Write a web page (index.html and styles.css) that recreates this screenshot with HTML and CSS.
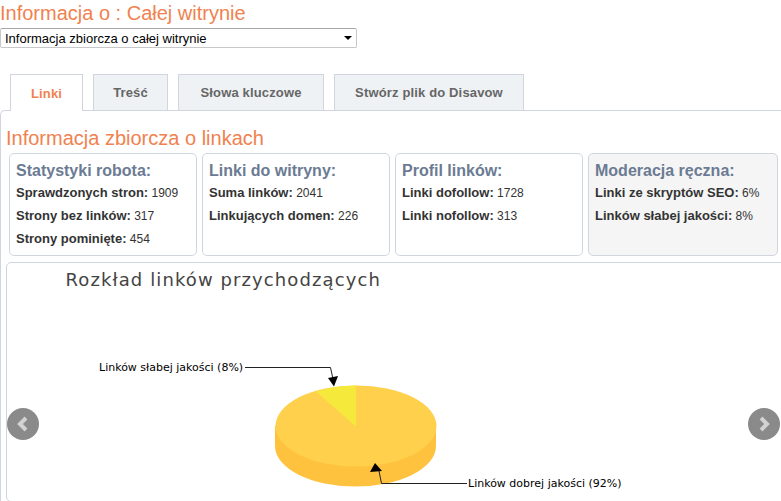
FILE: index.html
```html
<!DOCTYPE html>
<html>
<head>
    <meta charset="utf-8">
    <meta name="viewport" content="width=device-width, initial-scale=1.0">
    <link rel="stylesheet" href="styles.css">
</head>
<body>
    <div class="top">
        <h1 class="page-title">Informacja o : Całej witrynie</h1>
        <div class="select-box">
            <span>Informacja zbiorcza o całej witrynie</span>
            <span class="select-arrow"></span>
        </div>
    </div>

    <div class="tabs">
        <div class="tab active">Linki</div>
        <div class="tab tab-content">Treść</div>
        <div class="tab tab-keywords">Słowa kluczowe</div>
        <div class="tab tab-disavow">Stwórz plik do Disavow</div>
    </div>

    <div class="panel">
        <h2 class="panel-title">Informacja zbiorcza o linkach</h2>

        <div class="cards">
            <div class="card">
                <div class="card-title">Statystyki robota:</div>
                <div class="stat"><b>Sprawdzonych stron:</b> 1909</div>
                <div class="stat"><b>Strony bez linków:</b> 317</div>
                <div class="stat"><b>Strony pominięte:</b> 454</div>
            </div>
            <div class="card">
                <div class="card-title">Linki do witryny:</div>
                <div class="stat"><b>Suma linków:</b> 2041</div>
                <div class="stat"><b>Linkujących domen:</b> 226</div>
            </div>
            <div class="card">
                <div class="card-title">Profil linków:</div>
                <div class="stat"><b>Linki dofollow:</b> 1728</div>
                <div class="stat"><b>Linki nofollow:</b> 313</div>
            </div>
            <div class="card card-grey">
                <div class="card-title">Moderacja ręczna:</div>
                <div class="stat"><b>Linki ze skryptów SEO:</b> 6%</div>
                <div class="stat"><b>Linków słabej jakości:</b> 8%</div>
            </div>
        </div>

        <div class="chart">
            <svg class="chart-svg" width="775" height="238" viewBox="0 0 775 238">
                <text class="chart-title" x="58.5" y="23">Rozkład linków przychodzących</text>

                <!-- side of the pie -->
                <path d="M268 163 V183 A80.5 40.5 0 0 0 429 183 V163 Z" fill="#ffc23f"/>
                <ellipse cx="349" cy="163" rx="80.5" ry="40.5" fill="#ffd04c"/>
                <path d="M349 163.5 L349 122.5 A80.5 40.5 0 0 0 309 128.5 Z" fill="#f5e93c"/>

                <!-- labels -->
                <text class="chart-label" x="92" y="108">Linków słabej jakości (8%)</text>
                <path class="leader" d="M238 104.5 H323.5 L326 116"/>
                <path d="M327 123.5 L321 115 L331 113 Z" fill="#000"/>

                <path class="leader" d="M460 220.5 H374.5 L372 208"/>
                <path d="M368 200 L363 209 L375 208 Z" fill="#000"/>
                <text class="chart-label" x="461" y="224">Linków dobrej jakości (92%)</text>
            </svg>

            <div class="nav nav-prev">
                <svg width="14" height="18" viewBox="0 0 14 18"><path d="M10 3 L4 9 L10 15" fill="none" stroke="#d2d2d2" stroke-width="4"/></svg>
            </div>
            <div class="nav nav-next">
                <svg width="14" height="18" viewBox="0 0 14 18"><path d="M4 3 L10 9 L4 15" fill="none" stroke="#d2d2d2" stroke-width="4"/></svg>
            </div>
        </div>
    </div>
</body>
</html>
```

FILE: styles.css
```css
* {
    box-sizing: border-box;
}

html, body {
    height: 501px;
    overflow: hidden;
}

body {
    margin: 0;
    font-family: "Liberation Sans", Arial, sans-serif;
    font-size: 12px;
    color: #333;
    background: #fff;
}

.top {
    height: 74px;
}

.page-title {
    margin: 0;
    height: 28px;
    font-size: 20px;
    line-height: 26px;
    font-weight: normal;
    color: #f0824f;
}

.select-box {
    width: 357px;
    height: 20px;
    padding: 0 4px 0 4px;
    display: flex;
    align-items: center;
    justify-content: space-between;
    border: 1px solid #c8c8c8;
    border-top-color: #a8a8a8;
    border-radius: 2px;
    font-size: 13px;
    color: #000;
}

.select-arrow {
    width: 0;
    height: 0;
    border-left: 4px solid transparent;
    border-right: 4px solid transparent;
    border-top: 4px solid #000;
}

.tabs {
    display: flex;
    height: 37px;
    padding-left: 10px;
    position: relative;
    z-index: 1;
}

.tab {
    height: 36px;
    margin-right: 10px;
    display: flex;
    align-items: center;
    justify-content: center;
    background: #eff2f5;
    border: 1px solid #d0d5e0;
    border-bottom: none;
    font-size: 13px;
    font-weight: bold;
    letter-spacing: 0.15px;
    color: #666;
}

.tab.active {
    width: 73px;
    height: 37px;
    background: #fff;
    color: #f0824f;
}

.tab-content {
    width: 75px;
}

.tab-keywords {
    width: 146px;
}

.tab-disavow {
    width: 190px;
    margin-right: 0;
}

.panel {
    margin-top: -1px;
    padding: 16px 0 0 5px;
    width: 790px;
    height: 400px;
    border: 1px solid #d0d5e0;
    border-right: none;
    border-radius: 5px 0 0 0;
}

.panel-title {
    margin: 0 0 4px;
    font-size: 20px;
    line-height: 22px;
    font-weight: normal;
    color: #f0824f;
}

.cards {
    display: flex;
    gap: 5px;
    margin-left: 3px;
}

.card {
    width: 188px;
    height: 103px;
    padding: 7px 6px 0;
    border: 1px solid #d0d5e0;
    border-radius: 5px;
}

.card-grey {
    width: 190px;
    background: #f5f5f5;
}

.card-title {
    margin-bottom: 1px;
    font-size: 16px;
    line-height: 19px;
    font-weight: bold;
    color: #6b7b93;
}

.stat {
    height: 23px;
    line-height: 23px;
    font-size: 12px;
    white-space: nowrap;
}

.stat b {
    font-size: 13px;
}

.chart {
    position: relative;
    margin-top: 6px;
    height: 240px;
    width: 780px;
    border: 1px solid #d0d5e0;
    border-radius: 5px;
}

.chart-svg {
    display: block;
}

.chart-title {
    font-family: "DejaVu Sans", sans-serif;
    font-size: 18px;
    letter-spacing: 1.1px;
    fill: #444;
}

.chart-label {
    font-family: "DejaVu Sans", sans-serif;
    font-size: 11px;
    fill: #000;
}

.leader {
    fill: none;
    stroke: #222;
    stroke-width: 1;
}

.nav {
    position: absolute;
    top: 145px;
    width: 32px;
    height: 32px;
    display: flex;
    align-items: center;
    justify-content: center;
    background: #8a8a8a;
    border-radius: 50%;
}

.nav-prev {
    left: 0;
}

.nav-next {
    left: 741px;
}
```
